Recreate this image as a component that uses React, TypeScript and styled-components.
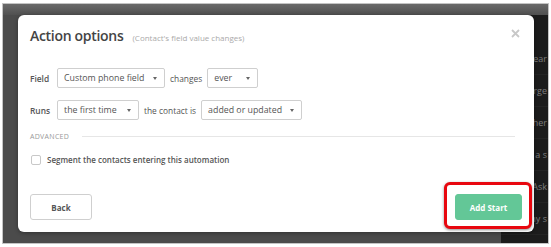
import React from 'react';
import styled, { createGlobalStyle } from 'styled-components';

const GlobalStyle = createGlobalStyle`
  html, body {
    margin: 0;
    padding: 0;
    background: #fff;
  }
  body {
    font-family: "Open Sans", "Liberation Sans", sans-serif;
  }
`;

const Page = styled.div`
  padding: 3px 0 0 2px;
`;

const Frame = styled.div`
  position: relative;
  width: 547px;
  height: 241px;
  box-sizing: border-box;
  border: 1px solid #c4c4c4;
  overflow: hidden;
  display: grid;
  grid-template-rows: 11px 1fr;
  background: #4b4b4b;
`;

const TopBand = styled.div`
  background: linear-gradient(#6a6a6a, #505050);
`;

const Body = styled.div`
  display: flex;
`;

const Main = styled.div`
  flex: 1;
  background: #4b4b4b;
`;

const Sidebar = styled.div`
  width: 47px;
  background: #1c1c1c;
  display: flex;
  flex-direction: column;
  padding-top: 28px;
`;

const SideRow = styled.div`
  height: 31px;
  display: flex;
  align-items: center;
  justify-content: flex-end;
  padding-right: 1px;
  border-bottom: 1px solid #242424;
  color: #7c7c7c;
  font-size: 9px;
  white-space: nowrap;
`;

const Modal = styled.div`
  position: absolute;
  left: 15px;
  top: 11px;
  width: 516px;
  height: 217px;
  box-sizing: border-box;
  background: #fff;
  border-radius: 6px;
  box-shadow: 0 1px 4px rgba(0, 0, 0, 0.35);
  padding: 11px 2px 3px 12px;
  display: flex;
  flex-direction: column;
`;

const Header = styled.div`
  display: flex;
  align-items: baseline;
  gap: 9px;
  height: 38px;
  padding-right: 12px;
`;

const Title = styled.h2`
  margin: 0;
  font-size: 14px;
  font-weight: 600;
  letter-spacing: -0.3px;
  line-height: 20px;
  color: #444;
`;

const Subtitle = styled.span`
  font-size: 8px;
  color: #aaa;
  flex: 1;
`;

const Close = styled.button`
  align-self: flex-start;
  margin-top: 3px;
  border: 0;
  background: none;
  padding: 0;
  width: 9px;
  height: 9px;
  display: flex;
  cursor: pointer;
`;

const Row = styled.div<{ $top: number }>`
  display: flex;
  align-items: center;
  gap: 5px;
  margin-top: ${(p) => p.$top}px;
  font-size: 8.4px;
  color: #555;
`;

const FieldLabel = styled.span`
  width: 22px;
  font-weight: 600;
`;

const Select = styled.div<{ $w: number }>`
  width: ${(p) => p.$w}px;
  height: 20px;
  box-sizing: border-box;
  border: 1px solid #cfcfcf;
  border-radius: 2px;
  display: flex;
  align-items: center;
  justify-content: space-between;
  padding: 0 7px 0 6px;
  font-size: 8.8px;
  color: #555;
`;

const Caret = styled.span`
  width: 0;
  height: 0;
  border-left: 2.5px solid transparent;
  border-right: 2.5px solid transparent;
  border-top: 3px solid #666;
`;

const Advanced = styled.div`
  display: flex;
  align-items: center;
  gap: 13px;
  margin-top: 12px;
  padding-right: 17px;
  font-size: 7px;
  letter-spacing: 0.3px;
  color: #999;
`;

const Rule = styled.div`
  flex: 1;
  height: 1px;
  background: #e6e6e6;
`;

const CheckRow = styled.label`
  display: flex;
  align-items: center;
  gap: 6px;
  margin-top: 13px;
  margin-left: 1px;
  font-size: 8px;
  font-weight: 600;
  color: #555;
`;

const Box = styled.span`
  width: 10px;
  height: 10px;
  box-sizing: border-box;
  border: 1px solid #c8c8c8;
  border-radius: 2px;
`;

const Footer = styled.div`
  margin-top: auto;
  display: flex;
  justify-content: space-between;
  align-items: flex-end;
`;

const Button = styled.button<{ $primary?: boolean }>`
  height: 26px;
  box-sizing: border-box;
  border-radius: 3px;
  font-family: inherit;
  font-size: 8px;
  font-weight: 700;
  cursor: pointer;
  border: 1px solid ${(p) => (p.$primary ? '#63c797' : '#cfcfcf')};
  background: ${(p) => (p.$primary ? '#63c797' : '#fff')};
  color: ${(p) => (p.$primary ? '#fff' : '#555')};
`;

const BackButton = styled(Button)`
  width: 62px;
  margin-bottom: 9px;
`;

const StartButton = styled(Button)`
  width: 67px;
`;

const Highlight = styled.div`
  border: 3px solid #e8070f;
  border-radius: 6px;
  padding: 9px 7px 6px 8px;
  background: #fff;
  box-shadow: 0 1px 3px rgba(0, 0, 0, 0.45);
`;

const sideItems = ['Clear', 'Merge', 'Other', 'Add a s', 'Ask', 'Any s'];

export default function App() {
  return (
    <>
      <GlobalStyle />
      <Page>
        <Frame>
          <TopBand />
          <Body>
            <Main />
            <Sidebar>
              {sideItems.map((s) => (
                <SideRow key={s}>{s}</SideRow>
              ))}
            </Sidebar>
          </Body>

          <Modal>
            <Header>
              <Title>Action options</Title>
              <Subtitle>(Contact's field value changes)</Subtitle>
              <Close aria-label="Close">
                <svg width="9" height="9" viewBox="0 0 9 9">
                  <path d="M1 1 L8 8 M8 1 L1 8" stroke="#c8c8c8" strokeWidth="1.8" />
                </svg>
              </Close>
            </Header>

            <Row $top={4}>
              <FieldLabel>Field</FieldLabel>
              <Select $w={108}>
                Custom phone field <Caret />
              </Select>
              <span>changes</span>
              <Select $w={51}>
                ever <Caret />
              </Select>
            </Row>

            <Row $top={12}>
              <FieldLabel>Runs</FieldLabel>
              <Select $w={82}>
                the first time <Caret />
              </Select>
              <span>the contact is</span>
              <Select $w={101}>
                added or updated <Caret />
              </Select>
            </Row>

            <Advanced>
              ADVANCED
              <Rule />
            </Advanced>

            <CheckRow>
              <Box />
              Segment the contacts entering this automation
            </CheckRow>

            <Footer>
              <BackButton>Back</BackButton>
              <Highlight>
                <StartButton $primary>Add Start</StartButton>
              </Highlight>
            </Footer>
          </Modal>
        </Frame>
      </Page>
    </>
  );
}
